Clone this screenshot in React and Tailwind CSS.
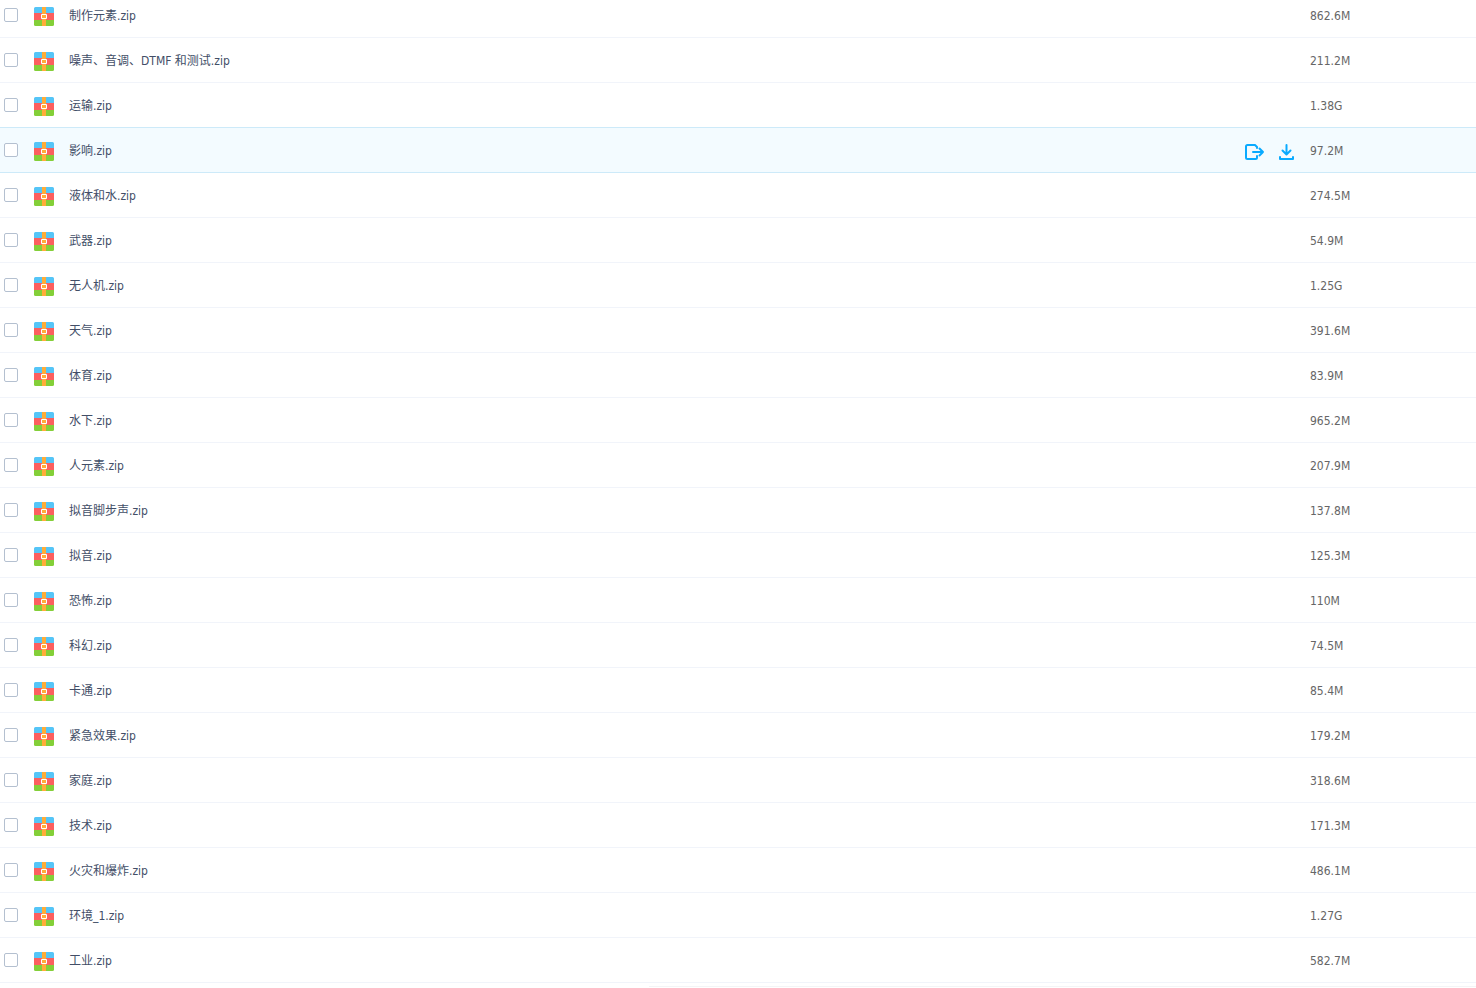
const FILES = [
  ['制作元素.zip', '862.6M'],
  ['噪声、音调、DTMF 和测试.zip', '211.2M'],
  ['运输.zip', '1.38G'],
  ['影响.zip', '97.2M'],
  ['液体和水.zip', '274.5M'],
  ['武器.zip', '54.9M'],
  ['无人机.zip', '1.25G'],
  ['天气.zip', '391.6M'],
  ['体育.zip', '83.9M'],
  ['水下.zip', '965.2M'],
  ['人元素.zip', '207.9M'],
  ['拟音脚步声.zip', '137.8M'],
  ['拟音.zip', '125.3M'],
  ['恐怖.zip', '110M'],
  ['科幻.zip', '74.5M'],
  ['卡通.zip', '85.4M'],
  ['紧急效果.zip', '179.2M'],
  ['家庭.zip', '318.6M'],
  ['技术.zip', '171.3M'],
  ['火灾和爆炸.zip', '486.1M'],
  ['环境_1.zip', '1.27G'],
  ['工业.zip', '582.7M'],
];

const ACTIVE = 3;

function ZipIcon() {
  return (
    <svg width="20" height="19" viewBox="0 0 20 19" className="shrink-0" aria-hidden="true">
      <path d="M0 6V1.5A1.5 1.5 0 0 1 1.5 0h17A1.5 1.5 0 0 1 20 1.5V6z" fill="#55c5f7" />
      <path d="M0 6h20v7H0z" fill="#fb5f5f" />
      <path d="M0 13h20v4.500a1.500 1.500 0 0 1-1.500 1.500h-17A1.500 1.500 0 0 1 0 17.500z" fill="#83cf38" />
      <path d="M8 0h4v19H8z" fill="#ffac38" />
      <path d="M7.500 7.500h5v4h-5z" fill="#ffac38" stroke="#fff" />
    </svg>
  );
}

function MoveIcon() {
  return (
    <svg
      width="20"
      height="18"
      viewBox="0 0 20 18"
      fill="none"
      stroke="#09aaff"
      strokeWidth="2"
      strokeLinecap="round"
      strokeLinejoin="round"
      aria-hidden="true"
    >
      <path d="M12 5V4l-2-2H2.500A1.500 1.500 0 0 0 1 3.500v11A1.500 1.500 0 0 0 2.500 16h8a1.500 1.500 0 0 0 1.500-1.500V13" />
      <path d="M8 9h10M14.500 5.500L18 9l-3.500 3.500" />
    </svg>
  );
}

function DownloadIcon() {
  return (
    <svg
      width="16"
      height="18"
      viewBox="0 0 16 18"
      fill="none"
      stroke="#09aaff"
      strokeWidth="2"
      strokeLinecap="round"
      strokeLinejoin="round"
      aria-hidden="true"
    >
      <path d="M7.500 2v9M3.500 7.500l4 4 4-4M1 14v2h13v-2" />
    </svg>
  );
}

function FileRow({ name, size, active, beforeActive }) {
  const line = active || beforeActive ? 'border-[#cdeaf9]' : 'border-[#f1f4fa]';
  return (
    <tr className={active ? 'bg-[#f3fbff]' : 'bg-white'}>
      <td className={`h-[45px] border-b p-0 ${line}`}>
        <div className="flex items-center pl-1">
          <label className="flex items-center">
            <input
              type="checkbox"
              aria-label={name}
              className="h-3.5 w-3.5 shrink-0 appearance-none rounded-xs border border-[#b4c0d0] bg-white"
            />
          </label>
          <span className="ml-4 pt-0.5">
            <ZipIcon />
          </span>
          <a href="#file" className="ml-[15px] pt-0.5 text-[#424e67]">
            {name}
          </a>
          {active && (
            <div className="mr-[15px] ml-auto flex gap-3.5 pt-1">
              <button type="button" aria-label="移动">
                <MoveIcon />
              </button>
              <button type="button" aria-label="下载">
                <DownloadIcon />
              </button>
            </div>
          )}
        </div>
      </td>
      <td className={`h-[45px] w-[166px] border-b p-0 pt-0.5 text-[#666666] ${line}`}>{size}</td>
    </tr>
  );
}

export default function App() {
  return (
    <main className="overflow-hidden bg-white font-['DejaVu_Sans_Condensed','DejaVu_Sans','Noto_Sans_CJK_SC',sans-serif] text-xs">
      <table className="-mt-[7px] w-full table-fixed border-separate border-spacing-0">
        <colgroup>
          <col />
          <col className="w-[166px]" />
        </colgroup>
        <tbody>
          {FILES.map(([name, size], i) => (
            <FileRow key={name} name={name} size={size} active={i === ACTIVE} beforeActive={i === ACTIVE - 1} />
          ))}
        </tbody>
      </table>
      <div className="mt-[3px] ml-[44%] border-t border-[#f4f4f6]" />
    </main>
  );
}
